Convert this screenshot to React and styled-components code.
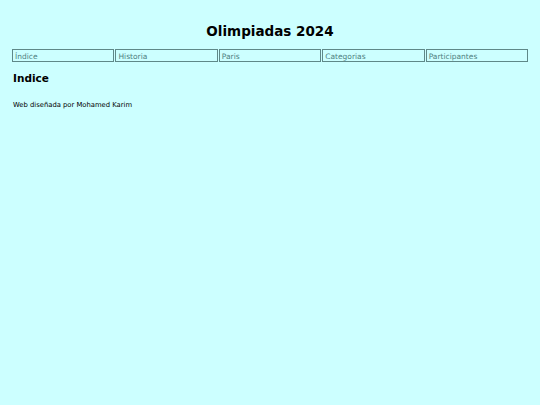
import { createGlobalStyle, styled } from "styled-components"

const GlobalStyle = createGlobalStyle`
  html, body {
    margin: 0;
    padding: 0;
    background: #ccffff;
  }
  body {
    font-family: "DejaVu Sans", Verdana, sans-serif;
    color: #000;
  }
`

const Page = styled.div`
  padding: 0 12px;
`

const Title = styled.h1`
  margin: 0;
  padding-top: 23px;
  height: 26px;
  font-size: 13.5px;
  line-height: 16px;
  font-weight: bold;
  text-align: center;
`

const Menu = styled.nav`
  display: flex;
  gap: 1px;
`

const MenuItem = styled.a`
  flex: 1;
  height: 10px;
  padding: 1px 2px 0;
  border: 1px solid #5f8888;
  font-size: 7.5px;
  line-height: 11px;
  color: #4f7f7f;
  text-decoration: none;
  overflow: hidden;
`

const Section = styled.h2`
  margin: 9px 0 0;
  padding-left: 1px;
  font-size: 10.5px;
  font-weight: bold;
  line-height: 14px;
`

const Footer = styled.p`
  margin: 15px 0 0;
  padding-left: 1px;
  font-size: 6.8px;
  line-height: 10px;
`

const links = ["Índice", "Historia", "Paris", "Categorias", "Participantes"]

function App() {
  return (
    <>
      <GlobalStyle />
      <Page>
        <Title>Olimpiadas 2024</Title>
        <Menu>
          {links.map(l => (
            <MenuItem key={l} href="#">
              {l}
            </MenuItem>
          ))}
        </Menu>
        <Section>Indice</Section>
        <Footer>Web diseñada por Mohamed Karim</Footer>
      </Page>
    </>
  )
}

export default App
